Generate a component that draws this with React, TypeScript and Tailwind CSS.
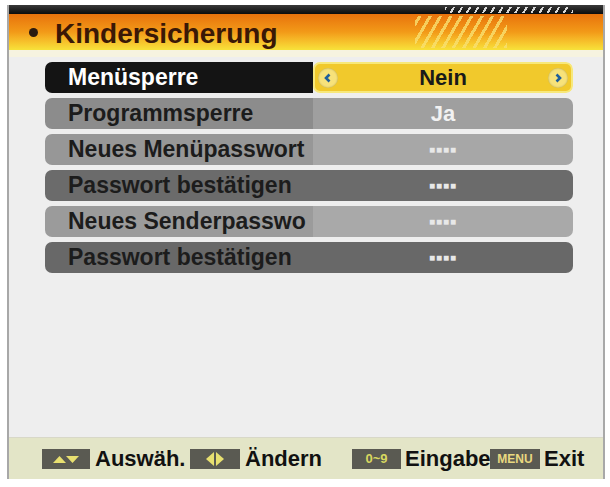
import React from 'react'

const font = { fontFamily: '"Liberation Sans", Arial, sans-serif' }

function Arrow({ dir }: { dir: 'l' | 'r' }) {
  return (
    <div className="flex h-[20px] w-[20px] items-center justify-center rounded-full bg-[#f7e27a] shadow-[inset_0_0_2px_rgba(0,0,0,0.3)]">
      <svg width="10" height="10" viewBox="0 0 10 10">
        {dir === 'l' ? (
          <path d="M6.5 1.5 L3 5 L6.5 8.5" stroke="#1f5f9a" strokeWidth="2.6" fill="none" />
        ) : (
          <path d="M3.5 1.5 L7 5 L3.5 8.5" stroke="#1f5f9a" strokeWidth="2.6" fill="none" />
        )}
      </svg>
    </div>
  )
}

const rows = [
  { label: 'Programmsperre', value: 'Ja', lbg: 'bg-[#8c8c8c]', vbg: 'bg-[#9f9f9f]' },
  { label: 'Neues Menüpasswort', value: '----', lbg: 'bg-[#979797]', vbg: 'bg-[#a7a7a7]' },
  { label: 'Passwort bestätigen', value: '----', lbg: 'bg-[#6b6b6b]', vbg: 'bg-[#6b6b6b]' },
  { label: 'Neues Senderpasswo', value: '----', lbg: 'bg-[#9b9b9b]', vbg: 'bg-[#a9a9a9]' },
  { label: 'Passwort bestätigen', value: '----', lbg: 'bg-[#686868]', vbg: 'bg-[#686868]' },
]

function Key({ children, w }: { children: React.ReactNode; w: string }) {
  return (
    <div className={`flex h-[20px] shrink-0 ${w} items-center justify-center bg-[#5a5a52]`}>{children}</div>
  )
}

export default function App() {
  return (
    <div className="h-[487px] w-[610px] overflow-hidden bg-white pl-[7px] pt-[5px]" style={font}>
      <div className="flex h-[474px] w-[598px] flex-col border-x-2 border-[#a8a8a8] bg-[#eeeeee]">
        {/* Header */}
        <div className="relative h-[9px] bg-gradient-to-b from-[#3a3a3a] to-[#0c0c0c]">
          <div className="absolute left-[436px] top-[2px] h-[6px] w-[128px] bg-[repeating-linear-gradient(-60deg,#d8d8d8_0px,#d8d8d8_2px,transparent_2px,transparent_7px)]" />
        </div>
        <div className="relative flex h-[36px] items-center bg-gradient-to-b from-[#e8720c] via-[#f29a18] to-[#f7e23a]">
          <div className="ml-[20px] h-[9px] w-[9px] rounded-full bg-[#2a1a10]" />
          <span className="ml-[17px] mt-[3px] text-[28px] leading-none font-bold text-[#3a1806]">Kindersicherung</span>
          <div className="absolute left-[406px] top-[2px] h-[32px] w-[92px] bg-[repeating-linear-gradient(-60deg,#f8e070_0px,#f8e070_3px,transparent_3px,transparent_9px)] opacity-80" />
        </div>
        <div className="h-[7px] bg-[#f6f3e0]" />

        {/* Rows */}
        <div className="flex flex-col gap-[5px] pl-[36px] pt-[5px]">
          <div className="flex h-[31px] w-[528px] overflow-hidden rounded-[7px]">
            <div className="flex w-[268px] shrink-0 items-center bg-[#141414] pl-[23px] text-[23px] font-bold text-white">
              Menüsperre
            </div>
            <div className="flex flex-1 items-center justify-between rounded-[7px] border-2 border-[#f7e87a] bg-[#f1c92c] px-[3px] text-[22px] font-bold text-[#1a1a1a]">
              <Arrow dir="l" />
              <span>Nein</span>
              <Arrow dir="r" />
            </div>
          </div>
          {rows.map((r, i) => (
            <div key={i} className="flex h-[31px] w-[528px] overflow-hidden rounded-[7px]">
              <div className={`flex w-[268px] shrink-0 items-center ${r.lbg} pl-[23px] text-[23px] font-bold text-[#1c1c1c] whitespace-nowrap`}>
                {r.label}
              </div>
              <div className={`flex flex-1 items-center justify-center ${r.vbg} text-[22px] font-bold text-[#f2f2f2]`}>
                {r.value === '----' ? <span className="text-[10px] tracking-[1px] text-[#e8e8e8]">■■■■</span> : r.value}
              </div>
            </div>
          ))}
        </div>

        <div className="flex-1" />

        {/* Footer */}
        <div className="flex h-[42px] items-center border-t border-[#d8d8c8] bg-[#e3e5c7] pl-[33px] text-[22px] font-bold text-[#111] whitespace-nowrap">
          <Key w="w-[48px]">
            <svg width="30" height="10" viewBox="0 0 30 10">
              <path d="M2 9 L8.5 2 L15 9 Z" fill="#e8e070" />
              <path d="M15 2 L21.5 9 L28 2 Z" fill="#e8e070" />
            </svg>
          </Key>
          <span className="ml-[5px] w-[95px]">Auswäh.</span>
          <Key w="w-[50px]">
            <svg width="22" height="16" viewBox="0 0 22 16">
              <path d="M10 1 L2 8 L10 15 Z" fill="#e8e070" />
              <path d="M12 1 L20 8 L12 15 Z" fill="#e8e070" />
            </svg>
          </Key>
          <span className="ml-[5px] w-[107px]">Ändern</span>
          <Key w="w-[49px]">
            <span className="text-[13px] leading-none text-[#d8d860]">0~9</span>
          </Key>
          <span className="ml-[4px] w-[85px]">Eingabe</span>
          <Key w="w-[50px]">
            <span className="text-[12px] leading-none text-[#e8d880]">MENU</span>
          </Key>
          <span className="ml-[4px]">Exit</span>
        </div>
      </div>
    </div>
  )
}
